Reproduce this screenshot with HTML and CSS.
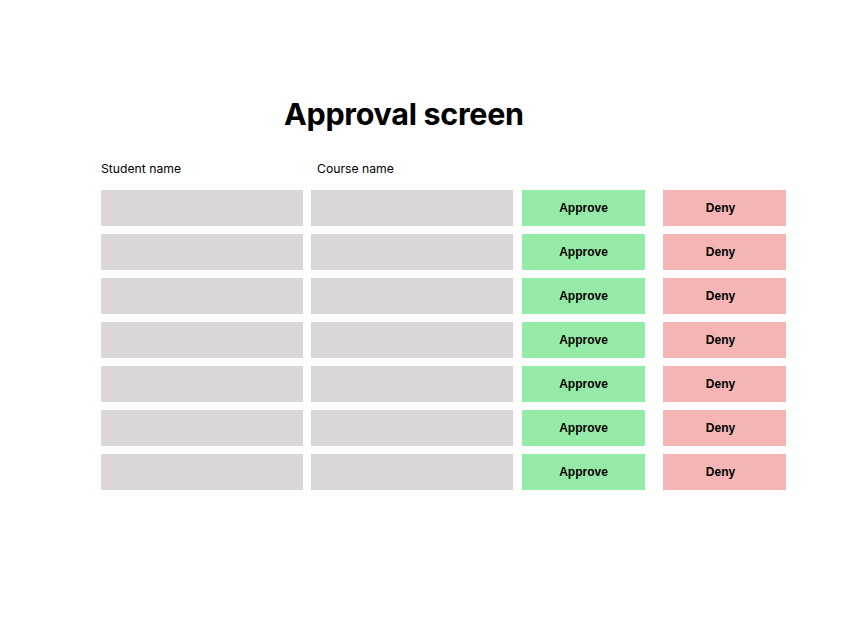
FILE: index.html
```html
<!DOCTYPE html>
<html>
<head>
<meta charset="utf-8">
<link rel="stylesheet" href="styles.css">
</head>
<body>
<div class="page">
  <h1 class="title">Approval screen</h1>
  <div class="labels">
    <div class="label label-student">Student name</div>
    <div class="label label-course">Course name</div>
  </div>
  <div class="rows">
    <div class="row"><div class="cell"></div><div class="cell"></div><div class="btn approve">Approve</div><div class="btn deny">Deny</div></div>
    <div class="row"><div class="cell"></div><div class="cell"></div><div class="btn approve">Approve</div><div class="btn deny">Deny</div></div>
    <div class="row"><div class="cell"></div><div class="cell"></div><div class="btn approve">Approve</div><div class="btn deny">Deny</div></div>
    <div class="row"><div class="cell"></div><div class="cell"></div><div class="btn approve">Approve</div><div class="btn deny">Deny</div></div>
    <div class="row"><div class="cell"></div><div class="cell"></div><div class="btn approve">Approve</div><div class="btn deny">Deny</div></div>
    <div class="row"><div class="cell"></div><div class="cell"></div><div class="btn approve">Approve</div><div class="btn deny">Deny</div></div>
    <div class="row"><div class="cell"></div><div class="cell"></div><div class="btn approve">Approve</div><div class="btn deny">Deny</div></div>
  </div>
</div>
</body>
</html>
```
FILE: styles.css
```css
html, body {
  margin: 0;
  padding: 0;
  background: #ffffff;
}
.page {
  padding: 96px 0 0 101px;
  font-family: Inter, "Noto Sans", sans-serif;
  color: #000;
}
.title {
  margin: 0 0 0 183px;
  font-size: 30.5px;
  font-weight: 700;
  line-height: 36px;
  letter-spacing: -0.3px;
}
.labels {
  display: flex;
  margin-top: 27px;
  height: 20px;
  align-items: center;
}
.label {
  font-size: 12.2px;
  line-height: 16px;
}
.label-student {
  width: 216px;
}
.rows {
  display: flex;
  flex-direction: column;
  gap: 8px;
  margin-top: 11px;
}
.row {
  display: flex;
  height: 36px;
}
.cell {
  width: 202px;
  background: #dbd7d7;
  margin-right: 8px;
}
.cell + .cell {
  margin-right: 9px;
}
.btn {
  width: 123px;
  box-sizing: border-box;
  display: flex;
  align-items: center;
  justify-content: center;
  font-family: "Liberation Sans", Arial, sans-serif;
  font-weight: 700;
  font-size: 12px;
}
.approve {
  background: #95eaa8;
  margin-right: 18px;
}
.deny {
  background: #f4b5b5;
  padding-right: 8px;
}
```
